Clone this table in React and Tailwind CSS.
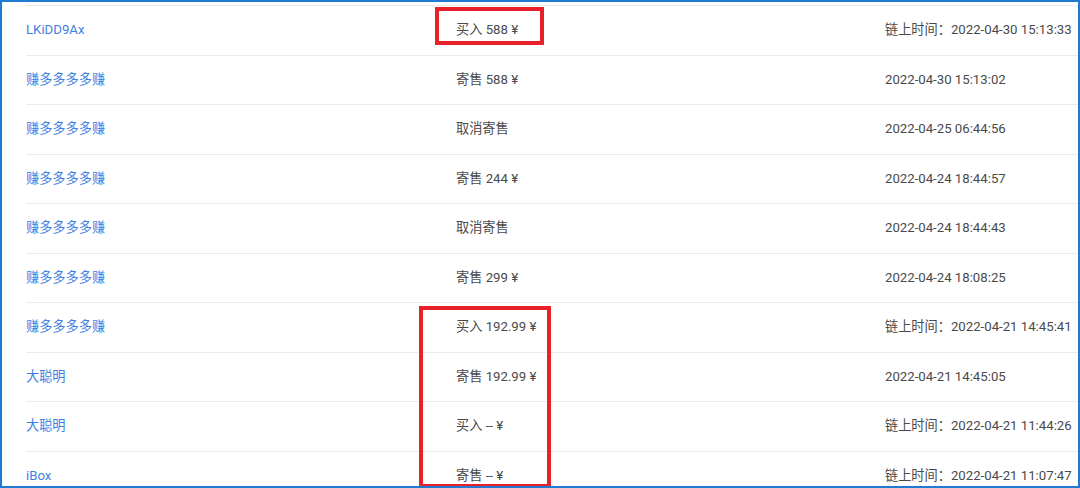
const rows = [
  { name: "LKiDD9Ax", action: "买入 588 ¥", time: "2022-04-30 15:13:33", chain: true },
  { name: "赚多多多多赚", action: "寄售 588 ¥", time: "2022-04-30 15:13:02" },
  { name: "赚多多多多赚", action: "取消寄售", time: "2022-04-25 06:44:56" },
  { name: "赚多多多多赚", action: "寄售 244 ¥", time: "2022-04-24 18:44:57" },
  { name: "赚多多多多赚", action: "取消寄售", time: "2022-04-24 18:44:43" },
  { name: "赚多多多多赚", action: "寄售 299 ¥", time: "2022-04-24 18:08:25" },
  { name: "赚多多多多赚", action: "买入 192.99 ¥", time: "2022-04-21 14:45:41", chain: true },
  { name: "大聪明", action: "寄售 192.99 ¥", time: "2022-04-21 14:45:05" },
  { name: "大聪明", action: "买入 -- ¥", time: "2022-04-21 11:44:26", chain: true },
  { name: "iBox", action: "寄售 -- ¥", time: "2022-04-21 11:07:47", chain: true },
];

export default function App() {
  return (
    <div
      className="relative h-[488px] w-[1080px] overflow-hidden border-2 border-[#1f7ad1] bg-white text-[13.2px] text-[#4a4a4a]"
      style={{ fontFamily: 'Roboto, "Noto Sans CJK SC", sans-serif' }}
    >
      <div className="pl-6 pt-[3px]">
        {rows.map((r, i) => (
          <div
            key={i}
            className="grid h-[49.5px] grid-cols-[430px_429px_1fr] items-center border-t border-[#e8ecf1]"
          >
            <span className="text-[#3f7fe3]">{r.name}</span>
            <span>{r.action}</span>
            <span>
              {r.chain ? "链上时间：" : ""}
              {r.time}
            </span>
          </div>
        ))}
      </div>

      {/* highlight boxes */}
      <div className="absolute left-[433px] top-[5px] h-[38px] w-[109px] border-[4px] border-[#e8202a]" />
      <div className="absolute left-[417px] top-[304px] h-[182px] w-[132px] border-[4px] border-[#e8202a]" />
    </div>
  );
}
